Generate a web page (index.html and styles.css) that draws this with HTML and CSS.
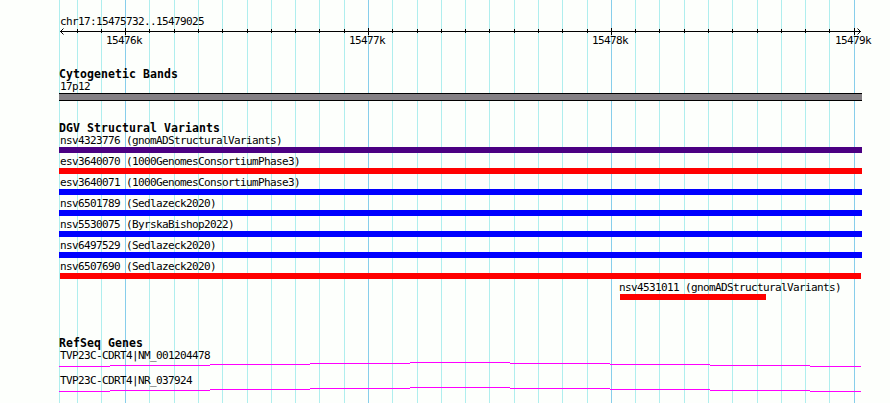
FILE: index.html
```
<!DOCTYPE html>
<html lang="en">
<head>
    <meta charset="UTF-8">
    <title>chr17:15475732..15479025</title>
    <link rel="stylesheet" href="styles.css">
</head>
<body>
    <div class="browser">
        <!-- Vertical grid, every 100 bp -->
        <svg class="grid" width="890" height="403" shape-rendering="crispEdges">
            <path class="minor" d="M59.5 0V403M77.5 0V403M101.5 0V403M149.5 0V403M174.5 0V403M198.5 0V403M222.5 0V403M247.5 0V403M271.5 0V403M295.5 0V403M319.5 0V403M344.5 0V403M392.5 0V403M417.5 0V403M441.5 0V403M465.5 0V403M489.5 0V403M514.5 0V403M538.5 0V403M562.5 0V403M587.5 0V403M635.5 0V403M659.5 0V403M684.5 0V403M708.5 0V403M732.5 0V403M757.5 0V403M781.5 0V403M805.5 0V403M829.5 0V403"/>
            <path class="major" d="M125.5 0V403M368.5 0V403M611.5 0V403M854.5 0V403"/>
        </svg>

        <header class="scale">
            <div class="label">chr17:15475732..15479025</div>
            <svg class="ruler" width="890" height="20" viewBox="0 27 890 20">
                <g shape-rendering="crispEdges">
                    <path d="M60 31.5H861"/>
                    <path d="M77.5 29V33M101.5 29V33M149.5 29V33M174.5 29V33M198.5 29V33M222.5 29V33M247.5 29V33M271.5 29V33M295.5 29V33M319.5 29V33M344.5 29V33M392.5 29V33M417.5 29V33M441.5 29V33M465.5 29V33M489.5 29V33M514.5 29V33M538.5 29V33M562.5 29V33M587.5 29V33M635.5 29V33M659.5 29V33M684.5 29V33M708.5 29V33M732.5 29V33M757.5 29V33M781.5 29V33M805.5 29V33M829.5 29V33"/>
                    <path d="M125.5 28V35M368.5 28V35M611.5 28V35M854.5 28V35"/>
                </g>
                <path d="M63.5 28.5L60.5 31.5L63.5 34.5M857.5 28.5L860.5 31.5L857.5 34.5"/>
                <text x="106" y="44">15476k</text>
                <text x="349" y="44">15477k</text>
                <text x="592" y="44">15478k</text>
                <text x="835" y="44">15479k</text>
            </svg>
        </header>

        <section class="track cytobands">
            <h2>Cytogenetic Bands</h2>
            <div class="label">17p12</div>
            <div class="band"></div>
        </section>

        <section class="track variants">
            <h2>DGV Structural Variants</h2>
            <div class="variant complex"><div class="label">nsv4323776 (gnomADStructuralVariants)</div><div class="bar"></div></div>
            <div class="variant loss"><div class="label">esv3640070 (1000GenomesConsortiumPhase3)</div><div class="bar"></div></div>
            <div class="variant gain"><div class="label">esv3640071 (1000GenomesConsortiumPhase3)</div><div class="bar"></div></div>
            <div class="variant gain"><div class="label">nsv6501789 (Sedlazeck2020)</div><div class="bar"></div></div>
            <div class="variant gain"><div class="label">nsv5530075 (ByrskaBishop2022)</div><div class="bar"></div></div>
            <div class="variant gain"><div class="label">nsv6497529 (Sedlazeck2020)</div><div class="bar"></div></div>
            <div class="variant loss inset"><div class="label">nsv6507690 (Sedlazeck2020)</div><div class="bar"></div></div>
            <div class="variant loss short"><div class="label">nsv4531011 (gnomADStructuralVariants)</div><div class="bar"></div></div>
        </section>

        <section class="track genes">
            <h2>RefSeq Genes</h2>
            <div class="gene">
                <div class="label">TVP23C-CDRT4|NM_001204478</div>
                <svg class="intron" width="802" height="5" shape-rendering="crispEdges">
                    <path d="M0 4.5H51M51 3.5H151M151 2.5H251M251 1.5H351M351 .5H451M451 1.5H551M551 2.5H651M651 3.5H751M751 4.5H802"/>
                </svg>
            </div>
            <div class="gene">
                <div class="label">TVP23C-CDRT4|NR_037924</div>
                <svg class="intron" width="802" height="5" shape-rendering="crispEdges">
                    <path d="M0 4.5H51M51 3.5H151M151 2.5H251M251 1.5H351M351 .5H451M451 1.5H551M551 2.5H651M651 3.5H751M751 4.5H802"/>
                </svg>
            </div>
        </section>
    </div>
</body>
</html>
```
FILE: styles.css
```
body {
    margin: 0;
    background-color: #fdfffc;
    color: #000;
    font-family: "DejaVu Sans Mono", monospace;
    font-size: 11px;
    line-height: 14px;
}

svg {
    display: block;
}

.browser {
    position: relative;
    box-sizing: border-box;
    width: 890px;
    height: 403px;
    padding-top: 15px;
    overflow: hidden;
}

/* grid runs behind all tracks */
.grid {
    position: absolute;
    top: 0;
    left: 0;
    z-index: -1;
}

.minor {
    stroke: #afeeee;
}

.major {
    stroke: #87ceeb;
}

.label,
.ruler text {
    letter-spacing: -0.622px;
    white-space: pre;
}

.label {
    height: 12px;
    padding-left: 1px;
}

.scale .label {
    padding-left: 60px;
}

.ruler path {
    fill: none;
    stroke: #000;
}

.track {
    width: 803px;
    margin-left: 59px;
}

.track h2 {
    height: 12px;
    margin: 0;
    font-size: 11.5px;
    font-weight: bold;
    line-height: 12px;
    letter-spacing: 0.077px;
}

.cytobands {
    margin-top: 21px;
}

.band {
    box-sizing: border-box;
    height: 8px;
    margin-top: 1px;
    border: solid #000;
    border-width: 1px 0;
    background-color: #848084;
}

.variants {
    margin-top: 21px;
}

.variant {
    height: 21px;
}

.bar {
    height: 6px;
    margin-top: 1px;
}

.complex .bar {
    background-color: #4b0082;
}

.loss .bar {
    background-color: #ff0000;
}

.gain .bar {
    background-color: #0000ff;
}

.inset .bar {
    margin-left: 1px;
    margin-right: 1px;
}

.short {
    width: 146px;
    margin-left: 561px;
}

.short .label {
    padding-left: 0;
    margin-left: -1px;
}

.genes {
    margin-top: 35px;
}

.gene {
    height: 25px;
}

.intron {
    margin-top: 1px;
    stroke: #ff00ff;
}
```
